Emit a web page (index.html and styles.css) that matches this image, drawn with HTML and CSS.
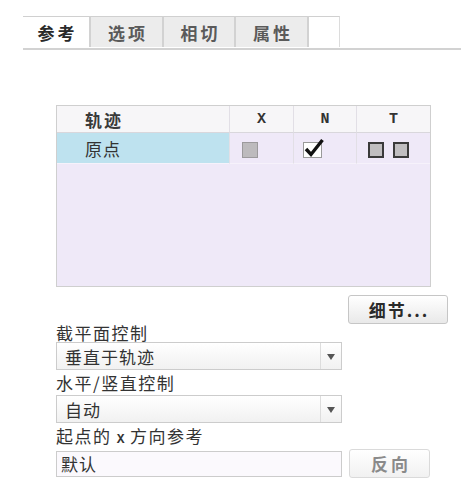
FILE: index.html
```html
<!DOCTYPE html>
<html lang="zh">
<head>
<meta charset="utf-8">
<title>参考</title>
<link rel="stylesheet" href="styles.css">
</head>
<body>
<div class="tabs">
  <div class="tab active">参考</div>
  <div class="tab">选项</div>
  <div class="tab">相切</div>
  <div class="tab">属性</div>
  <div class="tab blank"></div>
  <div class="tab-rest"></div>
</div>

<div class="content">
  <div class="panel">
    <div class="grid">
      <div class="cell head first">轨迹</div>
      <div class="cell head mono">X</div>
      <div class="cell head mono">N</div>
      <div class="cell head mono">T</div>

      <div class="cell row first sel">原点</div>
      <div class="cell row px12"><span class="box gray"></span></div>
      <div class="cell row px9">
        <svg class="check" width="23" height="22" viewBox="0 0 23 22">
          <rect x="1.5" y="5.5" width="18" height="15" fill="#fff" stroke="#9a9a9a"/>
          <path d="M4 12 L9 17.5 L20.5 3" fill="none" stroke="#111" stroke-width="3.4" stroke-linejoin="miter"/>
        </svg>
      </div>
      <div class="cell row px11"><span class="box dark"></span><span class="box dark"></span></div>
    </div>
  </div>

  <div class="btn-row">
    <button class="btn detail">细节...</button>
  </div>

  <div class="label l1">截平面控制</div>
  <div class="select">
    <span class="select-text">垂直于轨迹</span>
    <span class="select-arrow"></span>
  </div>

  <div class="label l2">水平/竖直控制</div>
  <div class="select">
    <span class="select-text">自动</span>
    <span class="select-arrow"></span>
  </div>

  <div class="label l3">起点的 <span class="mono-x">X</span> 方向参考</div>
  <div class="ref-row">
    <div class="input">默认</div>
    <button class="btn reverse">反向</button>
  </div>
</div>
</body>
</html>
```

FILE: styles.css
```css
html, body {
  margin: 0;
  padding: 0;
  background: #ffffff;
}
body {
  font-family: "Noto Sans CJK SC", "Noto Sans", sans-serif;
  color: #333;
  width: 461px;
  height: 487px;
  overflow: hidden;
}

/* tabs */
.tabs {
  display: flex;
  margin: 16px 0 0 23px;
  height: 32px;
  border-bottom: 2px solid #d2d2d2;
}
.tab {
  height: 31px;
  border-top: 1px solid #d0d0d0;
  border-right: 2px solid #d2d2d2;
  background: #ececec;
  color: #5a5a5a;
  font-size: 17px;
  font-weight: 700;
  letter-spacing: 3px;
  padding-left: 3px;
  box-sizing: border-box;
  display: flex;
  align-items: center;
  justify-content: center;
  line-height: 1;
}
.tab:nth-child(1) { width: 68px; background: #ffffff; color: #2a2a2a; }
.tab:nth-child(2) { width: 73px; }
.tab:nth-child(3) { width: 72px; }
.tab:nth-child(4) { width: 73px; }
.tab.blank {
  width: 31px;
  background: #ffffff;
  border-right: 1px solid #dcdcdc;
}
.tab-rest {
  flex: 1;
}

/* content */
.content {
  margin-left: 56px;
  padding-top: 55px;
}
.panel {
  width: 375px;
  height: 182px;
  box-sizing: border-box;
  border: 1px solid #cfcfcf;
  background: #efe9f8;
}
.grid {
  display: grid;
  grid-template-columns: 173px 64px 63px 73px;
  grid-template-rows: 27px 31px;
}
.cell {
  display: flex;
  align-items: center;
  box-sizing: border-box;
  border-right: 1px solid #e2dfe6;
}
.cell:nth-child(4n) { border-right: none; }
.head {
  background: #f7f6f8;
  border-bottom: 1px solid #d9d7dc;
  font-weight: 700;
  font-size: 17px;
  color: #3a3a3a;
  letter-spacing: 2px;
}
.head.mono {
  justify-content: center;
  font-family: "Liberation Mono", monospace;
  font-size: 15px;
  letter-spacing: 0;
  color: #333;
}
.first { padding-left: 28px; }
.row {
  border-bottom: 1px solid #f6f2fb;
  background: #efe9f8;
  font-size: 17px;
  letter-spacing: 1px;
  color: #333;
}
.row.sel { background: #bee2ef; }
.px12 { padding-left: 12px; }
.px9 { padding-left: 8px; }
.px11 { padding-left: 11px; gap: 9px; }
.box {
  display: inline-block;
  width: 16px;
  height: 16px;
  box-sizing: border-box;
  background: #bdbbbd;
  margin-top: 3px;
}
.box.gray { border: 1px solid #9c9a9c; }
.box.dark { border: 2px solid #3a3a3a; width: 16px; height: 16px; background: #c0bec0; }
.check { display: block; margin-top: -1px; }

/* button */
.btn-row {
  width: 392px;
  display: flex;
  justify-content: flex-end;
  margin-top: 8px;
}
.btn {
  font-family: "Noto Sans CJK SC", sans-serif;
  font-weight: 700;
  font-size: 17px;
  border: 1px solid #c6c6c6;
  border-radius: 3px;
  background: linear-gradient(#ffffff, #e9e9e9);
  padding: 0;
  margin: 0;
}
.btn.detail {
  width: 100px;
  height: 29px;
  color: #2a2a2a;
  letter-spacing: 2px;
  padding-left: 2px;
}

/* labels */
.label {
  font-size: 17px;
  letter-spacing: 1.5px;
  color: #333;
  line-height: 18px;
}
.label.l1 { height: 18px; }
.label.l2 { height: 25px; line-height: 25px; }
.label.l3 { height: 26px; line-height: 26px; }
.mono-x {
  font-family: "Liberation Mono", monospace;
  font-size: 13px;
  font-weight: 700;
  letter-spacing: 0;
}

/* select */
.select {
  width: 286px;
  height: 28px;
  box-sizing: border-box;
  border: 1px solid #cccccc;
  background: linear-gradient(#ffffff, #f1f1f1);
  display: flex;
  align-items: center;
}
.select-text {
  flex: 1;
  padding-left: 8px;
  font-size: 17px;
  letter-spacing: 1px;
  color: #333;
}
.select-arrow {
  width: 20px;
  height: 26px;
  border-left: 1px solid #dddddd;
  position: relative;
}
.select-arrow::after {
  content: "";
  position: absolute;
  left: 6px;
  top: 11px;
  border-left: 4px solid transparent;
  border-right: 4px solid transparent;
  border-top: 6px solid #555555;
}

/* reference row */
.ref-row {
  display: flex;
  align-items: center;
  width: 374px;
}
.input {
  width: 286px;
  height: 26px;
  box-sizing: border-box;
  border: 1px solid #cccccc;
  background: #fbf9fd;
  font-size: 17px;
  letter-spacing: 1px;
  padding-left: 4px;
  line-height: 24px;
  color: #333;
}
.btn.reverse {
  margin-left: 7px;
  width: 81px;
  height: 29px;
  color: #8a8a8a;
  letter-spacing: 3px;
  padding-left: 3px;
  border-color: #dadada;
  background: linear-gradient(#ffffff, #f1f1f1);
}
```
